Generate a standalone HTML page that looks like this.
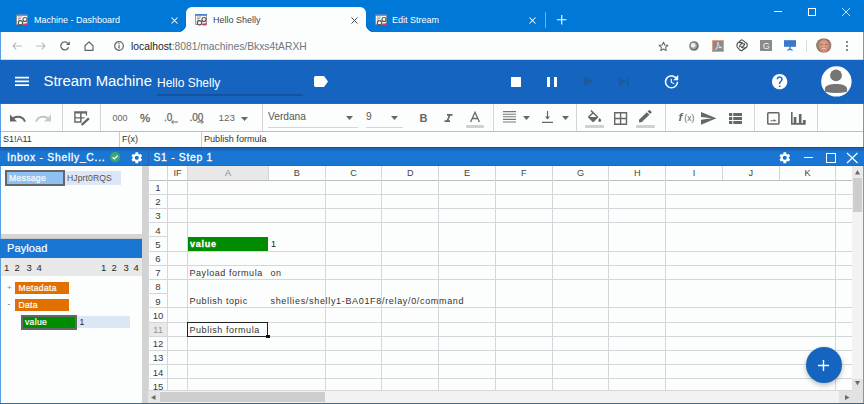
<!DOCTYPE html>
<html><head><meta charset="utf-8">
<style>
*{box-sizing:border-box;margin:0;padding:0}
html,body{width:864px;height:404px;overflow:hidden;background:#fcfefd;font-family:"Liberation Sans",sans-serif}
.a{position:absolute}
svg{position:absolute;overflow:visible}
.t{position:absolute;white-space:nowrap;line-height:1}
</style></head><body>
<!-- TAB STRIP -->
<div class="a" style="left:0;top:0;width:864px;height:32px;background:#0078d7"></div>
<!-- active tab -->
<div class="a" style="left:186px;top:7px;width:180px;height:26px;background:#fcfefd;border-radius:6px 6px 0 0"></div>
<div class="a" style="left:178px;top:24px;width:8px;height:8px;background:radial-gradient(circle at 0 0,#0078d7 8px,#fcfefd 8.5px)"></div>
<div class="a" style="left:366px;top:24px;width:8px;height:8px;background:radial-gradient(circle at 100% 0,#0078d7 8px,#fcfefd 8.5px)"></div>


<!-- favicons -->
<svg style="left:16px;top:14px" width="12" height="12" viewBox="0 0 12 12"><rect x="0.5" y="0.5" width="11" height="10" fill="#f4f4f4" stroke="#888" stroke-width="0.8"/><rect x="0" y="0" width="12" height="1.8" fill="#4a80c8"/><path d="M2 3h4M2 4.5h3M2 6h2" stroke="#999" stroke-width="0.8"/><circle cx="9" cy="5.5" r="2" fill="none" stroke="#555" stroke-width="1.1"/><circle cx="4.5" cy="8.8" r="2.2" fill="none" stroke="#555" stroke-width="1.1"/><path d="M7.5 9.5h2.5l1-1 1 1.5-1 1.5h-3.5z" fill="#e0307a"/></svg>
<div class="t" style="left:34px;top:15.8px;font-size:9px;color:#fff">Machine - Dashboard</div>
<svg style="left:171px;top:17px" width="7" height="7" viewBox="0 0 7 7"><path d="M0.5 0.5l6 6M6.5 0.5l-6 6" stroke="#fff" stroke-width="1.05"/></svg>

<svg style="left:195px;top:14px" width="12" height="12" viewBox="0 0 12 12"><rect x="0.5" y="0.5" width="11" height="10" fill="#f4f4f4" stroke="#888" stroke-width="0.8"/><rect x="0" y="0" width="12" height="1.8" fill="#4a80c8"/><path d="M2 3h4M2 4.5h3M2 6h2" stroke="#999" stroke-width="0.8"/><circle cx="9" cy="5.5" r="2" fill="none" stroke="#555" stroke-width="1.1"/><circle cx="4.5" cy="8.8" r="2.2" fill="none" stroke="#555" stroke-width="1.1"/><path d="M7.5 9.5h2.5l1-1 1 1.5-1 1.5h-3.5z" fill="#e0307a"/></svg>
<div class="t" style="left:213px;top:15.8px;font-size:9px;color:#45484c">Hello Shelly</div>
<svg style="left:351px;top:17px" width="7" height="7" viewBox="0 0 7 7"><path d="M0.5 0.5l6 6M6.5 0.5l-6 6" stroke="#45484c" stroke-width="1"/></svg>

<svg style="left:375px;top:14px" width="12" height="12" viewBox="0 0 12 12"><rect x="0.5" y="0.5" width="11" height="10" fill="#f4f4f4" stroke="#888" stroke-width="0.8"/><rect x="0" y="0" width="12" height="1.8" fill="#4a80c8"/><path d="M2 3h4M2 4.5h3M2 6h2" stroke="#999" stroke-width="0.8"/><circle cx="9" cy="5.5" r="2" fill="none" stroke="#555" stroke-width="1.1"/><circle cx="4.5" cy="8.8" r="2.2" fill="none" stroke="#555" stroke-width="1.1"/><path d="M7.5 9.5h2.5l1-1 1 1.5-1 1.5h-3.5z" fill="#e0307a"/></svg>
<div class="t" style="left:392px;top:15.8px;font-size:9px;color:#fff">Edit Stream</div>
<svg style="left:529px;top:17px" width="7" height="7" viewBox="0 0 7 7"><path d="M0.5 0.5l6 6M6.5 0.5l-6 6" stroke="#fff" stroke-width="1.05"/></svg>
<div class="a" style="left:545px;top:12px;width:1px;height:16px;background:#6fb0e8"></div>
<svg style="left:556.5px;top:15px" width="9.5" height="9.5" viewBox="0 0 11 11"><path d="M5.5 0v11M0 5.5h11" stroke="#fff" stroke-width="1.3"/></svg>
<!-- window controls -->
<div class="a" style="left:774.4px;top:11px;width:8px;height:1px;background:#fff"></div>
<div class="a" style="left:807.8px;top:7.7px;width:8.2px;height:8.2px;border:1px solid #fff"></div>
<svg style="left:842px;top:8px" width="8.2" height="8" viewBox="0 0 10 10"><path d="M0 0l10 10M10 0l-10 10" stroke="#fff" stroke-width="1"/></svg>

<!-- ADDRESS BAR -->
<div class="a" style="left:0;top:32px;width:864px;height:28px;background:#fcfefd;border-bottom:1px solid #d4dbe6"></div>

<svg style="left:12px;top:42px" width="10" height="8" viewBox="0 0 10 8"><path d="M10 4H1M4.2 0.7L1 4l3.2 3.3" stroke="#b8b8b8" stroke-width="1.1" fill="none"/></svg>
<svg style="left:36px;top:42px" width="10" height="8" viewBox="0 0 10 8"><path d="M0 4h9M5.8 0.7L9 4 5.8 7.3" stroke="#b8b8b8" stroke-width="1.1" fill="none"/></svg>
<svg style="left:60px;top:41px" width="10" height="10" viewBox="0 0 10 10"><path d="M8.6 6.2A4 4 0 1 1 7.8 2.2" stroke="#5f6368" stroke-width="1.3" fill="none"/><path d="M9.8 0.2V4H6z" fill="#5f6368"/></svg>
<svg style="left:84px;top:41px" width="10" height="10" viewBox="0 0 10 10"><path d="M1 9.3V4.7L5 0.9l4 3.8v4.6z" stroke="#5f6368" stroke-width="1.2" fill="none" stroke-linejoin="round"/></svg>
<svg style="left:114px;top:41px" width="10" height="10" viewBox="0 0 10 10"><circle cx="5" cy="5" r="4.3" stroke="#5f6368" stroke-width="1.2" fill="none"/><path d="M5 4.2v3.3" stroke="#5f6368" stroke-width="1.3"/><circle cx="5" cy="2.7" r="0.7" fill="#5f6368"/></svg>
<div class="t" style="left:131px;top:41.5px;font-size:10.3px;color:#202124">localhost<span style="color:#70757a">:8081/machines/Bkxs4tARXH</span></div>
<svg style="left:658px;top:41px" width="11" height="11" viewBox="0 0 24 24"><path d="M12 2.5l2.9 6.3 6.8.7-5.1 4.6 1.4 6.8L12 17.4l-6 3.5 1.4-6.8-5.1-4.6 6.8-.7z" stroke="#5f6368" stroke-width="2.2" fill="none" stroke-linejoin="round"/></svg>
<svg style="left:689px;top:40.8px" width="10" height="10" viewBox="0 0 10 10"><circle cx="5" cy="5" r="4.8" fill="#737373"/><circle cx="4.6" cy="4.8" r="3.2" fill="#a8a8a8"/><circle cx="4.1" cy="4.3" r="2.3" fill="#eee"/></svg>
<div class="a" style="left:712px;top:39.5px;width:12px;height:12.2px;background:#8a8a8a;border:1px solid #e2a08a"></div>
<svg style="left:713px;top:40.5px" width="10" height="10" viewBox="0 0 10 10"><path d="M5 1C4.5 3 4.8 5 3.5 7.5 2.5 9 1.5 9 2.8 7.8 4.5 6.5 6.5 6.3 8.5 6.8 9.5 7 8.8 5.8 7 6 5.8 4.5 5.2 3 5 1z" stroke="#f4e6e6" stroke-width="0.8" fill="none"/></svg>
<svg style="left:735.8px;top:39.3px" width="12.2" height="12.4" viewBox="0 0 12 12"><path d="M6 0.8L10.6 4.2Q11.6 6 10.6 7.8L6 11.2Q5 11.6 4 11L1.2 7.8Q0.4 6 1.4 4.2L5 1Q5.5 0.6 6 0.8z" fill="none" stroke="#4a4a4a" stroke-width="1.1"/><path d="M3 3.5Q6 2.5 7.5 5M9 8.5Q6 9.5 4.5 7M3.5 8Q3.5 5 6 4.2M8.5 4Q8.5 7 6 7.8" stroke="#4a4a4a" stroke-width="1" fill="none"/><circle cx="6" cy="6" r="1.3" fill="none" stroke="#7a8fb0" stroke-width="0.5"/></svg>
<div class="a" style="left:760px;top:39.8px;width:11.7px;height:11.7px;background:#8a8a8a"></div>
<div class="t" style="left:762.8px;top:41.8px;font-size:9px;color:#f0f0f0">G</div>
<svg style="left:784.2px;top:40.2px" width="12" height="11" viewBox="0 0 12 11"><rect x="0" y="0" width="12" height="6.8" fill="#3c78c8"/><rect x="0" y="0" width="12" height="1" fill="#5a90d8"/><path d="M6 6.5v3.5M3.5 10.5L6 8.8 8.5 10.5" stroke="#3c78c8" stroke-width="1.3" fill="none"/></svg>
<div class="a" style="left:806px;top:40px;width:1px;height:12px;background:#dadce0"></div>
<svg style="left:815.8px;top:38.2px" width="15.6" height="15" viewBox="0 0 16 15"><defs><clipPath id="avc"><ellipse cx="8" cy="7.5" rx="7.8" ry="7.5"/></clipPath></defs><g clip-path="url(#avc)"><rect width="16" height="15" fill="#9a6a5a"/><ellipse cx="8" cy="7.8" rx="5.6" ry="6.6" fill="#d08a72"/><ellipse cx="8" cy="6" rx="4" ry="3.5" fill="#dc9c84"/><path d="M4.5 6.5h2.2M9.3 6.5h2.2" stroke="#7a4a3a" stroke-width="0.7"/><path d="M6 10.5q2 1 4 0" stroke="#f0e0d8" stroke-width="0.9" fill="none"/><path d="M0 7Q1 2 3 3L2.5 11z M16 7Q15 2 13 3L13.5 11z" fill="#888"/></g></svg>
<div class="a" style="left:846px;top:41px;width:2px;height:2px;background:#5f6368;border-radius:1px"></div>
<div class="a" style="left:846px;top:45px;width:2px;height:2px;background:#5f6368;border-radius:1px"></div>
<div class="a" style="left:846px;top:49px;width:2px;height:2px;background:#5f6368;border-radius:1px"></div>

<!-- APP BAR -->
<div class="a" style="left:0;top:60px;width:864px;height:44px;background:#1565c0"></div>
<div class="a" style="left:0;top:103px;width:864px;height:1px;background:#3c6597"></div>

<svg style="left:15px;top:75px" width="14" height="12" viewBox="15 75 14 12"><path d="M15 77.7h14M15 81.4h14M15 85.1h14" stroke="#fff" stroke-width="1.7"/></svg>
<div class="t" style="left:43.5px;top:73.5px;font-size:14.9px;color:#fff">Stream Machine</div>
<div class="t" style="left:157px;top:77px;font-size:12px;color:#fff">Hello Shelly</div>
<div class="a" style="left:157px;top:94px;width:146px;height:2px;background:#1552a0"></div>
<svg style="left:314px;top:76px" width="14" height="11" viewBox="0 0 14 10" preserveAspectRatio="none"><path d="M1.5 0H10l4 5-4 5H1.5A1.5 1.5 0 0 1 0 8.5v-7A1.5 1.5 0 0 1 1.5 0z" fill="#fff"/></svg>
<div class="a" style="left:511px;top:77px;width:10px;height:10px;background:#fff"></div>
<div class="a" style="left:547px;top:77px;width:3px;height:10px;background:#fff"></div>
<div class="a" style="left:553.5px;top:77px;width:3px;height:10px;background:#fff"></div>
<svg style="left:584px;top:76px" width="9" height="11" viewBox="0 0 9 11"><path d="M0 0l9 5.5L0 11z" fill="#1e5a9c"/></svg>
<svg style="left:619.2px;top:76.8px" width="9.6" height="9.2" viewBox="0 0 9.6 9.2"><path d="M0 0l7.3 4.6L0 9.2z" fill="#1e5a9c"/><rect x="7.9" y="0" width="1.7" height="9.2" fill="#1e5a9c"/></svg>
<svg style="left:665.2px;top:75.1px" width="13.2" height="12.9" viewBox="3.3 3 17.7 17.3" preserveAspectRatio="none"><path d="M21 10.12h-6.78l2.74-2.82c-2.730-2.7-7.15-2.8-9.88-.1-2.73 2.71-2.73 7.08 0 9.79s7.15 2.71 9.88 0C18.32 15.65 19 14.08 19 12.1h2c0 1.98-.88 4.55-2.64 6.29-3.51 3.48-9.21 3.48-12.72 0-3.5-3.47-3.53-9.11-.02-12.58s9.14-3.47 12.65 0L21 3v7.12zM12.5 8v4.25l3.5 2.08-.72 1.21L11 13V8h1.5z" fill="#fff"/></svg>
<svg style="left:771.9px;top:73.7px" width="15.3" height="15.3" viewBox="2 2 20 20"><path d="M12 2C6.48 2 2 6.48 2 12s4.48 10 10 10 10-4.48 10-10S17.52 2 12 2zm1 17h-2v-2h2v2zm2.07-7.75l-.9.92C13.45 12.9 13 13.5 13 15h-2v-.5c0-1.1.45-2.1 1.17-2.830l1.24-1.26c.37-.36.59-.86.59-1.41 0-1.1-.9-2-2-2s-2 .9-2 2H8c0-2.21 1.79-4 4-4s4 1.79 4 4c0 .88-.36 1.68-.93 2.25z" fill="#fff"/></svg>
<svg style="left:816px;top:62px" width="40" height="40" viewBox="816 62 40 40"><circle cx="836.4" cy="81.4" r="15.2" fill="#fff"/><circle cx="836" cy="75.4" r="5.9" fill="#757575"/><path d="M824.9 88.6C824.9 85.4 831 84.1 836 84.1S847 85.4 847 88.6V91.8Q836 94.2 824.9 91.8Z" fill="#757575"/></svg>

<!-- TOOLBAR -->
<div class="a" style="left:0;top:104px;width:864px;height:28px;background:#fcfefd;border-bottom:1px solid #bdbdbd"></div>

<div class="a" style="left:62px;top:104px;width:1px;height:27px;background:#d6d6d6"></div>
<div class="a" style="left:100px;top:104px;width:1px;height:27px;background:#d6d6d6"></div>
<div class="a" style="left:261.5px;top:104px;width:1px;height:27px;background:#d6d6d6"></div>
<div class="a" style="left:492.8px;top:104px;width:1px;height:27px;background:#d6d6d6"></div>
<div class="a" style="left:575.5px;top:104px;width:1px;height:27px;background:#d6d6d6"></div>
<div class="a" style="left:664.5px;top:104px;width:1px;height:27px;background:#d6d6d6"></div>
<div class="a" style="left:753.5px;top:104px;width:1px;height:27px;background:#d6d6d6"></div>
<div class="a" style="left:817px;top:104px;width:1px;height:27px;background:#d6d6d6"></div>
<!-- undo / redo -->
<svg style="left:10px;top:114px" width="16" height="9" viewBox="0 0 16 9"><path d="M15 7.6C13.6 4.2 10.5 2.8 7.5 2.8 5.6 2.8 4 3.5 2.8 4.6" stroke="#666" stroke-width="2" fill="none"/><path d="M0 0.5v7h7z" fill="#666"/></svg>
<svg style="left:35px;top:114px" width="16" height="9" viewBox="0 0 16 9"><path d="M1 7.6C2.4 4.2 5.5 2.8 8.5 2.8 10.4 2.8 12 3.5 13.2 4.6" stroke="#c4c4c4" stroke-width="2" fill="none"/><path d="M16 0.5v7H9z" fill="#c8c8c8"/></svg>
<!-- table edit -->
<svg style="left:74px;top:111px" width="16" height="15" viewBox="0 0 16 15"><path d="M0.2 0.2h12.9v2.2H0.2zM0.2 0.2h1.4v11.55H0.2zM0.2 10.35h6.5v1.4H0.2zM6.1 0.2h1.5v11.55H6.1zM0.2 6.3h10.3v1.3H0.2zM11.8 0.2h1.3v4.3h-1.3z" fill="#666"/><path d="M8.3 13.3l6-5.4" stroke="#666" stroke-width="2.3" stroke-linecap="round"/></svg>
<div class="t" style="left:112.5px;top:114px;font-size:9px;color:#666">000</div>
<div class="t" style="left:140px;top:112.5px;font-size:11.5px;color:#666;-webkit-text-stroke:0.3px #666">%</div>
<div class="t" style="left:164px;top:112.8px;font-size:10px;color:#666;-webkit-text-stroke:0.25px #666">.0</div>
<svg style="left:171px;top:120px" width="7" height="4" viewBox="0 0 7 4"><path d="M7 2H1M2.5 0.3L0.5 2l2 1.7" stroke="#666" stroke-width="1" fill="none"/></svg>
<div class="t" style="left:189.5px;top:112.8px;font-size:10px;color:#666;-webkit-text-stroke:0.25px #666">.00</div>
<svg style="left:197px;top:120px" width="7" height="4" viewBox="0 0 7 4"><path d="M0 2h6M4.5 0.3L6.5 2l-2 1.7" stroke="#666" stroke-width="1" fill="none"/></svg>
<div class="t" style="left:218.5px;top:113px;font-size:9.8px;color:#666">123</div>
<svg style="left:240.5px;top:116.5px" width="7" height="4" viewBox="0 0 7 4"><path d="M0 0h7L3.5 4z" fill="#666"/></svg>
<div class="t" style="left:268px;top:111.5px;font-size:10.2px;color:#555">Verdana</div>
<svg style="left:346px;top:116px" width="7" height="4" viewBox="0 0 7 4"><path d="M0 0h7L3.5 4z" fill="#666"/></svg>
<div class="a" style="left:268px;top:127px;width:90px;height:1px;background:#d6d6d6"></div>
<div class="t" style="left:366px;top:111.5px;font-size:10.2px;color:#555">9</div>
<svg style="left:391px;top:116px" width="7" height="4" viewBox="0 0 7 4"><path d="M0 0h7L3.5 4z" fill="#666"/></svg>
<div class="a" style="left:366px;top:127px;width:37px;height:1px;background:#d6d6d6"></div>
<div class="t" style="left:419.5px;top:113px;font-size:11px;color:#666;font-weight:bold">B</div>
<svg style="left:444px;top:114px" width="9" height="8" viewBox="0 0 9 8"><path d="M3 0.8h5.5M0.5 7.2H6M5.8 0.8L3.2 7.2" stroke="#666" stroke-width="1.7" fill="none"/></svg>
<svg style="left:470px;top:112px" width="10" height="10" viewBox="0 0 10 10"><path d="M0.6 10L5 0.3 9.4 10M2.2 6.5h5.6" stroke="#666" stroke-width="1.3" fill="none"/></svg>
<div class="a" style="left:465.5px;top:124.5px;width:18px;height:3px;background:#d0d0d0;border-radius:1px"></div>
<svg style="left:503px;top:111px" width="13" height="12" viewBox="0 0 13 12"><path d="M0 0.6h13M0 3.2h13M0 5.8h13M0 8.4h13M0 11h13" stroke="#777" stroke-width="1.1"/></svg>
<svg style="left:523px;top:116px" width="7" height="4" viewBox="0 0 7 4"><path d="M0 0h7L3.5 4z" fill="#666"/></svg>
<svg style="left:542px;top:111px" width="11" height="12" viewBox="0 0 11 12"><path d="M5.5 0v8M0 11.3h11" stroke="#666" stroke-width="1.2" fill="none"/><path d="M3 5.5l2.5 3 2.5-3z" fill="#666"/></svg>
<svg style="left:561.5px;top:116px" width="7" height="4" viewBox="0 0 7 4"><path d="M0 0h7L3.5 4z" fill="#666"/></svg>
<!-- paint bucket -->
<svg style="left:587.9px;top:109.9px" width="13.2" height="12" viewBox="3 0 18 17" preserveAspectRatio="none"><path d="M16.56 8.94L7.62 0 6.21 1.41l2.38 2.38-5.15 5.15c-.59.59-.59 1.54 0 2.12l5.5 5.5c.29.29.68.44 1.06.44s.77-.15 1.06-.44l5.5-5.5c.59-.58.59-1.530 0-2.12zM5.21 10L10 5.21 14.790 10H5.21zM19 11.5s-2 2.17-2 3.5c0 1.1.9 2 2 2s2-.9 2-2c0-1.33-2-3.5-2-3.5z" fill="#666"/></svg>
<div class="a" style="left:585px;top:124.8px;width:18.5px;height:3px;background:#d0d0d0;border-radius:1px"></div>
<svg style="left:613.8px;top:112px" width="13.2" height="13" viewBox="0 0 13.2 13"><path d="M0.7 0.7h11.8v11.6H0.7zM6.6 0.7v11.6M0.7 6.5h11.8" stroke="#666" stroke-width="1.4" fill="none"/></svg>
<svg style="left:639.3px;top:109.7px" width="12.7" height="12.2" viewBox="3 3 18 18" preserveAspectRatio="none"><path d="M3 17.25V21h3.75L17.81 9.94l-3.75-3.75L3 17.25zM20.71 7.04c.39-.39.39-1.02 0-1.41l-2.34-2.34c-.39-.39-1.02-.39-1.41 0l-1.83 1.83 3.75 3.75 1.83-1.83z" fill="#666"/></svg>
<div class="a" style="left:636px;top:124.8px;width:18.5px;height:3px;background:#d0d0d0;border-radius:1px"></div>
<div class="t" style="left:678.5px;top:111.5px;font-size:11.5px;color:#666;font-style:italic;font-weight:bold">f</div>
<div class="t" style="left:684.3px;top:113.5px;font-size:8.5px;color:#666">(x)</div>
<svg style="left:701.3px;top:112.1px" width="15.4" height="12.7" viewBox="2 3 21 18" preserveAspectRatio="none"><path d="M2.01 21L23 12 2.01 3 2 10l15 2-15 2z" fill="#666"/></svg>
<svg style="left:729px;top:113px" width="13" height="11" viewBox="0 0 13 11"><path d="M0 0h3.3v3.1H0zM4.3 0H13v3.1H4.3zM0 4h3.3v3.1H0zM4.3 4H13v3.1H4.3zM0 8h3.3v3H0zM4.3 8H13v3H4.3z" fill="#666"/></svg>
<svg style="left:767px;top:112.1px" width="13" height="13" viewBox="0 0 13 13"><rect x="0.75" y="0.75" width="11.2" height="11.2" rx="0.8" stroke="#666" stroke-width="1.5" fill="none"/><path d="M3 9.3l1.5-1.3 1 0.8 1.6-1.6L9.8 9.3z" fill="#666"/></svg>
<svg style="left:791.3px;top:112.1px" width="15" height="13" viewBox="0 0 15 13"><path d="M0 0h1.6v12.7H0zM0 11.1h14.7v1.6H0zM2.7 4.9h2.7v7H2.7zM7.9 2h2.6v9.5H7.9zM11.9 7.9h2.8v4H11.9z" fill="#666"/></svg>

<!-- FORMULA BAR -->
<div class="a" style="left:0;top:132px;width:864px;height:15px;background:#fcfefd"></div>

<div class="a" style="left:0;top:146.5px;width:864px;height:1px;background:#ccc"></div>
<div class="a" style="left:119px;top:132px;width:1px;height:15px;background:#ccc"></div>
<div class="a" style="left:201px;top:132px;width:1px;height:15px;background:#ccc"></div>
<div class="t" style="left:3px;top:135px;font-size:9px;color:#333">S1!A11</div>
<div class="t" style="left:122px;top:135px;font-size:9px;color:#333">F(x)</div>
<div class="t" style="left:204px;top:135px;font-size:9.1px;color:#333">Publish formula</div>

<!-- PANELS -->
<div class="a" style="left:0;top:147px;width:864px;height:1px;background:#1d4f8f"></div>
<div class="a" style="left:0;top:148px;width:864px;height:18px;background:#1976d2"></div>
<div class="a" style="left:148px;top:148px;width:1px;height:18px;background:#2a64a8"></div>
<div class="a" style="left:0;top:148px;width:864px;height:3px;background:linear-gradient(#1862b6,#1a6ac4)"></div>
<div class="a" style="left:0;top:165px;width:864px;height:1px;background:#1c6cc4"></div>
<div class="t" style="left:7px;top:153px;font-size:10.3px;letter-spacing:0.75px;color:#fff;-webkit-text-stroke:0.3px #fff">Inbox - Shelly_C...</div>
<svg style="left:109.7px;top:152.3px" width="10.2" height="10.2" viewBox="0 0 11 11"><circle cx="5.5" cy="5.5" r="5.5" fill="#3aa870"/><path d="M2.8 5.6l1.9 1.9 3.6-3.6" stroke="#fff" stroke-width="1.4" fill="none"/></svg>
<svg style="left:129.6px;top:150.6px" width="13.6" height="13.6" viewBox="0 0 24 24"><path d="M19.14 12.94c.04-.3.06-.61.06-.94 0-.32-.02-.64-.07-.94l2.03-1.58c.18-.14.23-.41.12-.61l-1.92-3.32c-.12-.22-.37-.29-.59-.22l-2.39.96c-.5-.38-1.03-.7-1.62-.94l-.36-2.54c-.04-.24-.24-.41-.48-.41h-3.84c-.24 0-.43.17-.47.41l-.36 2.54c-.59.24-1.13.57-1.62.94l-2.39-.96c-.22-.08-.47 0-.59.22L2.74 8.87c-.12.21-.08.47.12.61l2.03 1.58c-.05.3-.09.63-.09.94s.02.64.07.94l-2.03 1.58c-.18.14-.23.41-.12.61l1.92 3.32c.12.22.37.29.59.22l2.39-.96c.5.38 1.03.7 1.62.94l.36 2.54c.05.24.24.41.48.41h3.84c.24 0 .44-.17.47-.41l.36-2.54c.59-.24 1.13-.56 1.62-.94l2.39.96c.22.08.47 0 .59-.22l1.92-3.32c.12-.22.07-.47-.12-.61l-2.01-1.58zM12 15.6c-1.98 0-3.6-1.62-3.6-3.6s1.62-3.6 3.6-3.6 3.6 1.62 3.6 3.6-1.62 3.6-3.6 3.6z" fill="#fff"/></svg>
<div class="a" style="left:5px;top:170px;width:60px;height:16px;background:#8ec0f2;border:2px solid #666"></div>
<div class="t" style="left:9px;top:174px;font-size:8.6px;letter-spacing:0.3px;color:#f4faff;-webkit-text-stroke:0.25px #f4faff">Message</div>
<div class="a" style="left:65px;top:171px;width:56px;height:14px;background:#dce6f4"></div>
<div class="t" style="left:67px;top:174px;font-size:8.6px;letter-spacing:0.1px;color:#555">HJprt0RQS</div>
<div class="a" style="left:0;top:234px;width:143px;height:5px;background:#d6d6d6;border-bottom:1px solid #c4c4c4"></div>
<div class="a" style="left:0;top:239px;width:143px;height:19px;background:#1976d2"></div>
<div class="t" style="left:7px;top:243px;font-size:11px;letter-spacing:0.1px;color:#fff;-webkit-text-stroke:0.2px #fff">Payload</div>
<div class="a" style="left:0;top:258px;width:143px;height:17.5px;background:#e8e8e8"></div>
<div class="t" style="left:4px;top:262.5px;font-size:9.5px;color:#2a2a2a">1</div>
<div class="t" style="left:14.5px;top:262.5px;font-size:9.5px;color:#2a2a2a">2</div>
<div class="t" style="left:26.5px;top:262.5px;font-size:9.5px;color:#2a2a2a">3</div>
<div class="t" style="left:36.5px;top:262.5px;font-size:9.5px;color:#2a2a2a">4</div>
<div class="t" style="left:101px;top:262.5px;font-size:9.5px;color:#2a2a2a">1</div>
<div class="t" style="left:111.5px;top:262.5px;font-size:9.5px;color:#2a2a2a">2</div>
<div class="t" style="left:123.5px;top:262.5px;font-size:9.5px;color:#2a2a2a">3</div>
<div class="t" style="left:133.5px;top:262.5px;font-size:9.5px;color:#2a2a2a">4</div>
<div class="t" style="left:7px;top:284px;font-size:8px;color:#888">+</div>
<div class="a" style="left:15px;top:281.5px;width:54px;height:12.5px;background:#e07000"></div>
<div class="t" style="left:18.5px;top:283.5px;font-size:8.6px;letter-spacing:0.3px;color:#fff;-webkit-text-stroke:0.2px #fff">Metadata</div>
<div class="t" style="left:7.5px;top:300px;font-size:8px;color:#444">-</div>
<div class="a" style="left:15px;top:298.5px;width:54px;height:12.5px;background:#e07000"></div>
<div class="t" style="left:18.5px;top:300.5px;font-size:8.6px;letter-spacing:0.3px;color:#fff;-webkit-text-stroke:0.2px #fff">Data</div>
<div class="a" style="left:21px;top:314.5px;width:56px;height:15px;background:#008c00;border:2px solid #666"></div>
<div class="t" style="left:25px;top:317.5px;font-size:8.6px;letter-spacing:0.3px;color:#fff;-webkit-text-stroke:0.2px #fff">value</div>
<div class="a" style="left:77px;top:316px;width:53px;height:11.5px;background:#dce6f4"></div>
<div class="t" style="left:79.5px;top:318px;font-size:8.6px;color:#222">1</div>
<div class="a" style="left:142px;top:166px;width:5.6px;height:237px;background:#d3d3d3"></div>
<div class="t" style="left:153.5px;top:153px;font-size:10.4px;letter-spacing:0.68px;color:#fff;-webkit-text-stroke:0.3px #fff">S1 - Step 1</div>
<svg style="left:777.9000000000001px;top:150.6px" width="13.6" height="13.6" viewBox="0 0 24 24"><path d="M19.14 12.94c.04-.3.06-.61.06-.94 0-.32-.02-.64-.07-.94l2.03-1.58c.18-.14.23-.41.12-.61l-1.92-3.32c-.12-.22-.37-.29-.59-.22l-2.39.96c-.5-.38-1.03-.7-1.62-.94l-.36-2.54c-.04-.24-.24-.41-.48-.41h-3.84c-.24 0-.43.17-.47.41l-.36 2.54c-.59.24-1.13.57-1.62.94l-2.39-.96c-.22-.08-.47 0-.59.22L2.74 8.87c-.12.21-.08.47.12.61l2.03 1.58c-.05.3-.09.63-.09.94s.02.64.07.94l-2.03 1.58c-.18.14-.23.41-.12.61l1.92 3.32c.12.22.37.29.59.22l2.39-.96c.5.38 1.03.7 1.62.94l.36 2.54c.05.24.24.41.48.41h3.84c.24 0 .44-.17.47-.41l.36-2.54c.59-.24 1.13-.56 1.62-.94l2.39.96c.22.08.47 0 .59-.22l1.92-3.32c.12-.22.07-.47-.12-.61l-2.01-1.58zM12 15.6c-1.98 0-3.6-1.62-3.6-3.6s1.62-3.6 3.6-3.6 3.6 1.62 3.6 3.6-1.62 3.6-3.6 3.6z" fill="#fff"/></svg>
<div class="a" style="left:804px;top:157px;width:9px;height:1.2px;background:#fff"></div>
<div class="a" style="left:826px;top:152.5px;width:10px;height:10px;border:1.2px solid #fff"></div>
<svg style="left:847px;top:152.5px" width="10.5" height="10" viewBox="0 0 10.5 10"><path d="M0 0l10.5 10M10.5 0L0 10" stroke="#fff" stroke-width="1.2"/></svg>
<div class="a" style="left:148px;top:166px;width:704px;height:225px;background:#fcfefd;overflow:hidden">
<div class="a" style="left:0;top:0;width:704px;height:14px;background:#fcfefd"></div>
<div class="a" style="left:40px;top:0;width:80px;height:14px;background:#e8e8e8"></div>
<div class="a" style="left:0;top:156.0px;width:20px;height:14.2px;background:#e8e8e8"></div>
<div class="a" style="left:0;top:13.50px;width:704px;height:1px;background:#bcbcbc"></div>
<div class="a" style="left:0;top:27.70px;width:704px;height:1px;background:#d5d6d9"></div>
<div class="a" style="left:0;top:41.90px;width:704px;height:1px;background:#d5d6d9"></div>
<div class="a" style="left:0;top:56.10px;width:704px;height:1px;background:#d5d6d9"></div>
<div class="a" style="left:0;top:70.30px;width:20px;height:1px;background:#d5d6d9"></div>
<div class="a" style="left:0;top:84.50px;width:704px;height:1px;background:#d5d6d9"></div>
<div class="a" style="left:0;top:98.70px;width:704px;height:1px;background:#d5d6d9"></div>
<div class="a" style="left:0;top:112.90px;width:704px;height:1px;background:#d5d6d9"></div>
<div class="a" style="left:0;top:127.10px;width:20px;height:1px;background:#d5d6d9"></div>
<div class="a" style="left:0;top:141.30px;width:704px;height:1px;background:#d5d6d9"></div>
<div class="a" style="left:0;top:155.50px;width:704px;height:1px;background:#d5d6d9"></div>
<div class="a" style="left:0;top:169.70px;width:704px;height:1px;background:#d5d6d9"></div>
<div class="a" style="left:0;top:183.90px;width:704px;height:1px;background:#d5d6d9"></div>
<div class="a" style="left:0;top:198.10px;width:704px;height:1px;background:#d5d6d9"></div>
<div class="a" style="left:0;top:212.30px;width:704px;height:1px;background:#d5d6d9"></div>
<div class="a" style="left:0;top:226.50px;width:704px;height:1px;background:#d5d6d9"></div>
<div class="a" style="left:19.10px;top:0;width:1px;height:14px;background:#d5d6d9"></div>
<div class="a" style="left:19.10px;top:14px;width:1px;height:211px;background:#d5d6d9"></div>
<div class="a" style="left:39.10px;top:0;width:1px;height:14px;background:#d5d6d9"></div>
<div class="a" style="left:39.10px;top:14px;width:1px;height:211px;background:#d5d6d9"></div>
<div class="a" style="left:119.90px;top:0;width:1px;height:14px;background:#d5d6d9"></div>
<div class="a" style="left:176.65px;top:0;width:1px;height:14px;background:#d5d6d9"></div>
<div class="a" style="left:176.65px;top:14px;width:1px;height:211px;background:#d5d6d9"></div>
<div class="a" style="left:233.40px;top:0;width:1px;height:14px;background:#d5d6d9"></div>
<div class="a" style="left:233.40px;top:14px;width:1px;height:211px;background:#d5d6d9"></div>
<div class="a" style="left:290.15px;top:0;width:1px;height:14px;background:#d5d6d9"></div>
<div class="a" style="left:290.15px;top:14px;width:1px;height:211px;background:#d5d6d9"></div>
<div class="a" style="left:346.90px;top:0;width:1px;height:14px;background:#d5d6d9"></div>
<div class="a" style="left:346.90px;top:14px;width:1px;height:211px;background:#d5d6d9"></div>
<div class="a" style="left:403.65px;top:0;width:1px;height:14px;background:#d5d6d9"></div>
<div class="a" style="left:403.65px;top:14px;width:1px;height:211px;background:#d5d6d9"></div>
<div class="a" style="left:460.40px;top:0;width:1px;height:14px;background:#d5d6d9"></div>
<div class="a" style="left:460.40px;top:14px;width:1px;height:211px;background:#d5d6d9"></div>
<div class="a" style="left:517.15px;top:0;width:1px;height:14px;background:#d5d6d9"></div>
<div class="a" style="left:517.15px;top:14px;width:1px;height:211px;background:#d5d6d9"></div>
<div class="a" style="left:573.90px;top:0;width:1px;height:14px;background:#d5d6d9"></div>
<div class="a" style="left:630.65px;top:0;width:1px;height:14px;background:#d5d6d9"></div>
<div class="a" style="left:687.40px;top:0;width:1px;height:14px;background:#d5d6d9"></div>
<div class="a" style="left:687.40px;top:14px;width:1px;height:211px;background:#d5d6d9"></div>
<div class="a" style="left:0;top:0;width:1px;height:225px;background:#d5d6d9"></div>
<div class="t" style="left:19.60px;width:20.00px;text-align:center;top:3px;font-size:9.2px;color:#444">IF</div>
<div class="t" style="left:39.60px;width:80.80px;text-align:center;top:3px;font-size:9.2px;color:#888">A</div>
<div class="t" style="left:120.40px;width:56.75px;text-align:center;top:3px;font-size:9.2px;color:#444">B</div>
<div class="t" style="left:177.15px;width:56.75px;text-align:center;top:3px;font-size:9.2px;color:#444">C</div>
<div class="t" style="left:233.90px;width:56.75px;text-align:center;top:3px;font-size:9.2px;color:#444">D</div>
<div class="t" style="left:290.65px;width:56.75px;text-align:center;top:3px;font-size:9.2px;color:#444">E</div>
<div class="t" style="left:347.40px;width:56.75px;text-align:center;top:3px;font-size:9.2px;color:#444">F</div>
<div class="t" style="left:404.15px;width:56.75px;text-align:center;top:3px;font-size:9.2px;color:#444">G</div>
<div class="t" style="left:460.90px;width:56.75px;text-align:center;top:3px;font-size:9.2px;color:#444">H</div>
<div class="t" style="left:517.65px;width:56.75px;text-align:center;top:3px;font-size:9.2px;color:#444">I</div>
<div class="t" style="left:574.40px;width:56.75px;text-align:center;top:3px;font-size:9.2px;color:#444">J</div>
<div class="t" style="left:631.15px;width:56.75px;text-align:center;top:3px;font-size:9.2px;color:#444">K</div>
<div class="t" style="left:0;width:20px;text-align:center;top:17.00px;font-size:9.6px;color:#3a3a3a">1</div>
<div class="t" style="left:0;width:20px;text-align:center;top:31.20px;font-size:9.6px;color:#3a3a3a">2</div>
<div class="t" style="left:0;width:20px;text-align:center;top:45.40px;font-size:9.6px;color:#3a3a3a">3</div>
<div class="t" style="left:0;width:20px;text-align:center;top:59.60px;font-size:9.6px;color:#3a3a3a">4</div>
<div class="t" style="left:0;width:20px;text-align:center;top:73.80px;font-size:9.6px;color:#3a3a3a">5</div>
<div class="t" style="left:0;width:20px;text-align:center;top:88.00px;font-size:9.6px;color:#3a3a3a">6</div>
<div class="t" style="left:0;width:20px;text-align:center;top:102.20px;font-size:9.6px;color:#3a3a3a">7</div>
<div class="t" style="left:0;width:20px;text-align:center;top:116.40px;font-size:9.6px;color:#3a3a3a">8</div>
<div class="t" style="left:0;width:20px;text-align:center;top:130.60px;font-size:9.6px;color:#3a3a3a">9</div>
<div class="t" style="left:0;width:20px;text-align:center;top:144.80px;font-size:9.6px;color:#3a3a3a">10</div>
<div class="t" style="left:0;width:20px;text-align:center;top:159.00px;font-size:9.6px;color:#999">11</div>
<div class="t" style="left:0;width:20px;text-align:center;top:173.20px;font-size:9.6px;color:#3a3a3a">12</div>
<div class="t" style="left:0;width:20px;text-align:center;top:187.40px;font-size:9.6px;color:#3a3a3a">13</div>
<div class="t" style="left:0;width:20px;text-align:center;top:201.60px;font-size:9.6px;color:#3a3a3a">14</div>
<div class="t" style="left:0;width:20px;text-align:center;top:215.80px;font-size:9.6px;color:#3a3a3a">15</div>
<div class="a" style="left:40px;top:71.30px;width:80px;height:13.70px;background:#008c00"></div>
<div class="t" style="left:42px;top:74.30px;font-size:9px;font-weight:bold;letter-spacing:0.75px;color:#fff;-webkit-text-stroke:0.3px #fff">value</div>
<div class="t" style="left:123px;top:74.30px;font-size:9px;color:#222">1</div>
<div class="t" style="left:41.5px;top:102.70px;font-size:9px;letter-spacing:0.55px;color:#333">Payload formula</div>
<div class="t" style="left:122.5px;top:102.70px;font-size:9px;letter-spacing:0.4px;color:#333">on</div>
<div class="t" style="left:41.5px;top:131.10px;font-size:9px;letter-spacing:0.55px;color:#333">Publish topic</div>
<div class="t" style="left:122.5px;top:131.10px;font-size:9px;letter-spacing:0.67px;color:#333">shellies/shelly1-BA01F8/relay/0/command</div>
<div class="a" style="left:39px;top:155.50px;width:81px;height:15.20px;border:1.5px solid #222"></div>
<div class="a" style="left:118px;top:168.70px;width:3.5px;height:3.5px;background:#111"></div>
<div class="t" style="left:41.5px;top:159.50px;font-size:9px;letter-spacing:0.55px;color:#333">Publish formula</div>
</div>
<div class="a" style="left:852px;top:166px;width:11px;height:237px;background:#f2f2f2"></div>
<div class="a" style="left:852px;top:379px;width:11px;height:24px;background:#e2e2e2"></div>
<div class="a" style="left:852px;top:166px;width:11px;height:12.5px;background:#eaeaea"></div>
<svg style="left:855px;top:170px" width="5" height="5" viewBox="0 0 5 5"><path d="M0 4.5h5L2.5 0z" fill="#6a6a6a"/></svg>
<div class="a" style="left:853px;top:178px;width:9px;height:34px;background:#cdcdcd"></div>
<svg style="left:855px;top:381px" width="5" height="5" viewBox="0 0 5 5"><path d="M0 0h5L2.5 4.5z" fill="#6a6a6a"/></svg>
<div class="a" style="left:148px;top:390px;width:704px;height:1px;background:#d8d8d8"></div>
<div class="a" style="left:148px;top:391px;width:704px;height:12px;background:#f2f2f2"></div>
<div class="a" style="left:148px;top:391px;width:12px;height:12px;background:#e6e6e6"></div>
<svg style="left:151px;top:394.5px" width="5" height="5" viewBox="0 0 5 5"><path d="M4.5 0v5L0 2.5z" fill="#6a6a6a"/></svg>
<div class="a" style="left:160px;top:392px;width:165px;height:10px;background:#cdcdcd"></div>
<div class="a" style="left:839px;top:391px;width:13px;height:12px;background:#e2e2e2"></div>
<svg style="left:845px;top:394.5px" width="5" height="5" viewBox="0 0 5 5"><path d="M0 0v5L4.5 2.5z" fill="#6a6a6a"/></svg>
<div class="a" style="left:806px;top:347px;width:36px;height:36px;border-radius:50%;background:#1565c0;box-shadow:0 2px 5px rgba(0,0,0,0.28)"></div>
<svg style="left:818px;top:359.5px" width="11" height="11" viewBox="0 0 11 11"><path d="M5.5 0v11M0 5.5h11" stroke="#fff" stroke-width="1.4"/></svg>
<!-- window border -->
<div class="a" style="left:0;top:32px;width:1px;height:28px;background:#5a9fdf"></div>
<div class="a" style="left:0;top:104px;width:1px;height:43px;background:#5a9fdf"></div>
<div class="a" style="left:0;top:166px;width:1px;height:73px;background:#5a9fdf"></div>
<div class="a" style="left:0;top:258px;width:1px;height:146px;background:#5a9fdf"></div>
<div class="a" style="left:863px;top:32px;width:1px;height:28px;background:#5a9fdf"></div>
<div class="a" style="left:863px;top:104px;width:1px;height:43px;background:#5a9fdf"></div>
<div class="a" style="left:863px;top:166px;width:1px;height:238px;background:#5a9fdf"></div>
<div class="a" style="left:0;top:403px;width:864px;height:1px;background:#0078d7"></div>
</body></html>
